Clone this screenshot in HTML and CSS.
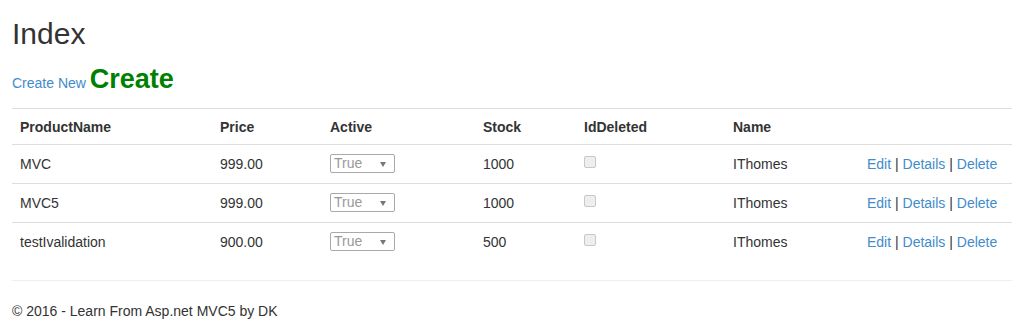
FILE: index.html
```html
<!DOCTYPE html>
<html>
<head>
    <title>Index</title>
    <link rel="stylesheet" href="styles.css">
</head>
<body>
    <div class="container">
        <h2>Index</h2>

        <p class="create-line">
            <a href="#">Create New</a>
            <span class="create-big">Create</span>
        </p>

        <table class="table">
            <colgroup>
                <col class="c-name">
                <col class="c-price">
                <col class="c-active">
                <col class="c-stock">
                <col class="c-deleted">
                <col class="c-user">
                <col class="c-actions">
            </colgroup>
            <thead>
                <tr>
                    <th>ProductName</th>
                    <th>Price</th>
                    <th>Active</th>
                    <th>Stock</th>
                    <th>IdDeleted</th>
                    <th>Name</th>
                    <th></th>
                </tr>
            </thead>
            <tbody>
                <tr>
                    <td>MVC</td>
                    <td>999.00</td>
                    <td><span class="fake-select">True<span class="arrow"></span></span></td>
                    <td>1000</td>
                    <td><span class="fake-check"></span></td>
                    <td>IThomes</td>
                    <td><a href="#">Edit</a> | <a href="#">Details</a> | <a href="#">Delete</a></td>
                </tr>
                <tr>
                    <td>MVC5</td>
                    <td>999.00</td>
                    <td><span class="fake-select">True<span class="arrow"></span></span></td>
                    <td>1000</td>
                    <td><span class="fake-check"></span></td>
                    <td>IThomes</td>
                    <td><a href="#">Edit</a> | <a href="#">Details</a> | <a href="#">Delete</a></td>
                </tr>
                <tr>
                    <td>testIvalidation</td>
                    <td>900.00</td>
                    <td><span class="fake-select">True<span class="arrow"></span></span></td>
                    <td>500</td>
                    <td><span class="fake-check"></span></td>
                    <td>IThomes</td>
                    <td><a href="#">Edit</a> | <a href="#">Details</a> | <a href="#">Delete</a></td>
                </tr>
            </tbody>
        </table>

        <hr>
        <footer>
            <p>&copy; 2016 - Learn From Asp.net MVC5 by DK</p>
        </footer>
    </div>
</body>
</html>
```

FILE: styles.css
```css
body {
    margin: 0;
    font-family: "Liberation Sans", Arial, sans-serif;
    font-size: 14px;
    line-height: 20px;
    color: #333;
    background-color: #fff;
}
.container {
    padding: 0 12px;
}
a {
    color: #428bca;
    text-decoration: none;
}
h2 {
    font-size: 30px;
    font-weight: 500;
    line-height: 33px;
    margin: 17px 0 0 0;
}
.create-line {
    margin: 19px 0 0 0;
}
.create-big {
    font-size: 27px;
    font-weight: bold;
    color: #008000;
    line-height: 20px;
}
.table {
    width: 1000px;
    table-layout: fixed;
    border-collapse: collapse;
    border-spacing: 0;
    margin-top: 15px;
    margin-bottom: 19px;
}
.c-name { width: 200px; }
.c-price { width: 110px; }
.c-active { width: 153px; }
.c-stock { width: 101px; }
.c-deleted { width: 149px; }
.c-user { width: 134px; }
.c-actions { width: 153px; }
.table th {
    text-align: left;
    font-weight: bold;
    padding: 8px 8px 7px 8px;
    border-top: 1px solid #ddd;
    border-bottom: 1px solid #ddd;
    vertical-align: top;
}
.table td {
    padding: 9px 8px 9px 8px;
    border-top: 1px solid #ddd;
    vertical-align: top;
    height: 20px;
}
.table tbody tr:first-child td {
    border-top: none;
}
.fake-select {
    display: block;
    position: relative;
    width: 60px;
    height: 17px;
    padding-left: 3px;
    border: 1px solid #a9a9a9;
    border-radius: 2px;
    color: #999;
    line-height: 17px;
}
.fake-select .arrow {
    position: absolute;
    right: 8px;
    top: 7px;
    width: 0;
    height: 0;
    border-left: 3px solid transparent;
    border-right: 3px solid transparent;
    border-top: 5px solid #777;
}
.fake-check {
    display: block;
    width: 10px;
    height: 10px;
    margin-top: 2px;
    border: 1px solid #c8c8c8;
    border-radius: 2px;
    background-color: #eee;
}
hr {
    margin: 0;
    border: 0;
    border-top: 1px solid #eee;
}
footer p {
    margin: 20px 0 0 0;
}
```
